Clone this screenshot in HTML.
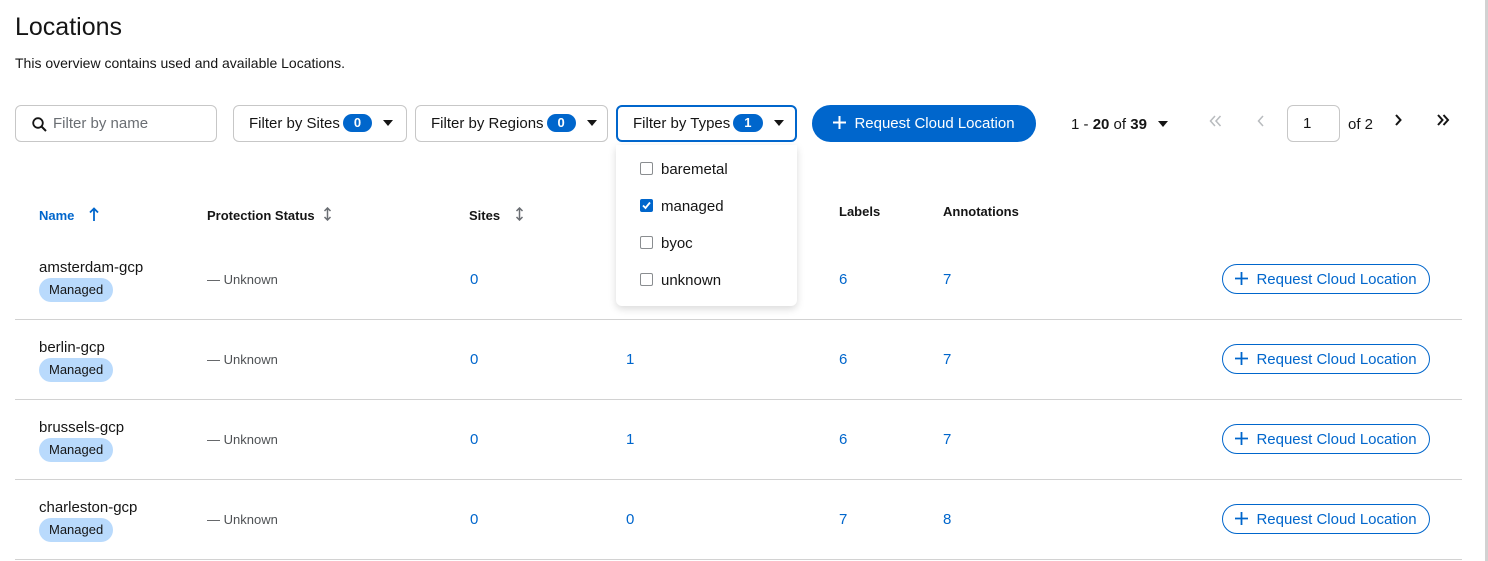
<!DOCTYPE html><html><head><style>
body{margin:0;width:1488px;height:561px;overflow:hidden;background:#fff;font-family:"Liberation Sans",sans-serif;color:#151515;position:relative}
.a{position:absolute;white-space:nowrap}
.box{position:absolute;box-sizing:border-box;border:1px solid #c7c7c7;border-radius:6px;height:37px;top:105px;font-size:15px;line-height:36px}
.badge{display:inline-block;background:#0066cc;color:#fff;border-radius:10px;font-size:13px;font-weight:bold;line-height:18px;padding:0 11px;margin-left:3px;vertical-align:1px}
.caret{display:inline-block;width:0;height:0;border-left:5px solid transparent;border-right:5px solid transparent;border-top:6px solid #151515;margin-left:11px;vertical-align:2px}
.link{color:#0066cc;font-size:15px}
.hdr{font-size:13px;font-weight:bold;color:#151515}
.man{position:absolute;left:39px;background:#b9dafc;border-radius:12px;font-size:13px;padding:0 10px;line-height:24px;color:#151515}
.rb{position:absolute;left:1222px;width:208px;height:30px;box-sizing:border-box;border:1px solid #0066cc;border-radius:16px;color:#0066cc;font-size:15px;line-height:29px;text-align:center}
.rb svg,.pb svg{vertical-align:-1px;margin-right:8px}
.line{position:absolute;left:15px;width:1447px;height:1px;background:#d2d2d2}
.cb{position:absolute;left:640px;width:13px;height:13px;box-sizing:border-box;border:1px solid #8a8d90;border-radius:2px}
</style></head><body>
<div class="a" style="left:15px;top:13px;font-size:25px">Locations</div>
<div class="a" style="left:15px;top:55px;font-size:14px">This overview contains used and available Locations.</div>
<div class="box" style="left:15px;width:202px;padding-left:37px;color:#6a6e73">Filter by name
<svg style="position:absolute;left:16px;top:11px" width="15" height="15" viewBox="0 0 15 15"><circle cx="6" cy="6" r="4.8" fill="none" stroke="#151515" stroke-width="1.8"/><path d="M9.5 9.5L14 14" stroke="#151515" stroke-width="2"/></svg></div>
<div class="box" style="left:233px;width:174px;padding-left:15px">Filter by Sites<span class="badge">0</span><span class="caret"></span></div>
<div class="box" style="left:415px;width:193px;padding-left:15px">Filter by Regions<span class="badge">0</span><span class="caret"></span></div>
<div class="box" style="left:616px;width:181px;padding-left:15px;border:2px solid #0066cc;line-height:34px">Filter by Types<span class="badge">1</span><span class="caret"></span></div>
<div class="a pb" style="left:812px;top:105px;width:224px;height:37px;border-radius:19px;background:#0066cc;color:#fff;font-size:15px;line-height:38px;text-align:center"><svg width="13" height="13" viewBox="0 0 13 13"><path d="M6.5 0V13M0 6.5H13" stroke="#fff" stroke-width="2"/></svg>Request Cloud Location</div>
<div class="a" style="left:1071px;top:116px;font-size:15px">1 - <b>20</b> of <b>39</b><span class="caret"></span></div>
<svg class="a" style="left:1209px;top:115px" width="13" height="12" viewBox="0 0 13 12"><path d="M6 1L1.5 6L6 11M11.5 1L7 6L11.5 11" stroke="#b8bbbe" stroke-width="1.5" fill="none"/></svg>
<svg class="a" style="left:1257px;top:115px" width="7" height="12" viewBox="0 0 7 12"><path d="M6 1L1.5 6L6 11" stroke="#b8bbbe" stroke-width="1.5" fill="none"/></svg>
<div class="box" style="left:1287px;width:53px;padding-left:15px">1</div>
<div class="a" style="left:1348px;top:116px;font-size:15px">of 2</div>
<svg class="a" style="left:1395px;top:114px" width="7" height="12" viewBox="0 0 7 12"><path d="M1 1L5.5 6L1 11" stroke="#151515" stroke-width="2" fill="none"/></svg>
<svg class="a" style="left:1437px;top:114px" width="13" height="12" viewBox="0 0 13 12"><path d="M1 1L5.5 6L1 11M6.5 1L11 6L6.5 11" stroke="#151515" stroke-width="2" fill="none"/></svg>
<div class="a hdr" style="left:39px;top:208px;color:#0066cc">Name</div>
<svg class="a" style="left:89px;top:207px" width="10" height="14" viewBox="0 0 10 14"><path d="M5 14V2M1 5.5L5 1.5L9 5.5" stroke="#0066cc" stroke-width="1.8" fill="none"/></svg>
<div class="a hdr" style="left:207px;top:208px">Protection Status</div>
<svg class="a" style="left:323px;top:207px" width="9" height="14" viewBox="0 0 9 14"><path d="M4.5 1V13M1.5 4L4.5 1L7.5 4M1.5 10L4.5 13L7.5 10" stroke="#6a6e73" stroke-width="1.5" fill="none"/></svg>
<div class="a hdr" style="left:469px;top:208px">Sites</div>
<svg class="a" style="left:515px;top:207px" width="9" height="14" viewBox="0 0 9 14"><path d="M4.5 1V13M1.5 4L4.5 1L7.5 4M1.5 10L4.5 13L7.5 10" stroke="#6a6e73" stroke-width="1.5" fill="none"/></svg>
<div class="a hdr" style="left:839px;top:204px">Labels</div>
<div class="a hdr" style="left:943px;top:204px">Annotations</div>
<div class="line" style="top:319px"></div><div class="line" style="top:399px"></div><div class="line" style="top:479px"></div><div class="line" style="top:559px"></div>
<div class="a" style="left:39px;top:259px;font-size:15px">amsterdam-gcp</div><div class="man" style="top:278px">Managed</div>
<div class="a" style="left:39px;top:339px;font-size:15px">berlin-gcp</div><div class="man" style="top:358px">Managed</div>
<div class="a" style="left:39px;top:419px;font-size:15px">brussels-gcp</div><div class="man" style="top:438px">Managed</div>
<div class="a" style="left:39px;top:499px;font-size:15px">charleston-gcp</div><div class="man" style="top:518px">Managed</div>
<div class="a" style="left:207px;top:272px;font-size:13px;color:#4f5255">— Unknown</div>
<div class="a" style="left:207px;top:352px;font-size:13px;color:#4f5255">— Unknown</div>
<div class="a" style="left:207px;top:432px;font-size:13px;color:#4f5255">— Unknown</div>
<div class="a" style="left:207px;top:512px;font-size:13px;color:#4f5255">— Unknown</div>
<div class="a link" style="left:470px;top:271px">0</div><div class="a link" style="left:839px;top:271px">6</div><div class="a link" style="left:943px;top:271px">7</div>
<div class="a link" style="left:470px;top:351px">0</div><div class="a link" style="left:626px;top:351px">1</div><div class="a link" style="left:839px;top:351px">6</div><div class="a link" style="left:943px;top:351px">7</div>
<div class="a link" style="left:470px;top:431px">0</div><div class="a link" style="left:626px;top:431px">1</div><div class="a link" style="left:839px;top:431px">6</div><div class="a link" style="left:943px;top:431px">7</div>
<div class="a link" style="left:470px;top:511px">0</div><div class="a link" style="left:626px;top:511px">0</div><div class="a link" style="left:839px;top:511px">7</div><div class="a link" style="left:943px;top:511px">8</div>
<div class="rb" style="top:264px"><svg width="13" height="13" viewBox="0 0 13 13"><path d="M6.5 0V13M0 6.5H13" stroke="#0066cc" stroke-width="1.8"/></svg>Request Cloud Location</div>
<div class="rb" style="top:344px"><svg width="13" height="13" viewBox="0 0 13 13"><path d="M6.5 0V13M0 6.5H13" stroke="#0066cc" stroke-width="1.8"/></svg>Request Cloud Location</div>
<div class="rb" style="top:424px"><svg width="13" height="13" viewBox="0 0 13 13"><path d="M6.5 0V13M0 6.5H13" stroke="#0066cc" stroke-width="1.8"/></svg>Request Cloud Location</div>
<div class="rb" style="top:504px"><svg width="13" height="13" viewBox="0 0 13 13"><path d="M6.5 0V13M0 6.5H13" stroke="#0066cc" stroke-width="1.8"/></svg>Request Cloud Location</div>
<div class="a" style="left:616px;top:145px;width:181px;height:161px;background:#fff;border-radius:0 0 6px 6px;box-shadow:0 3px 8px rgba(0,0,0,.15)"></div>
<div class="cb" style="top:162px"></div><div class="a" style="left:661px;top:161px;font-size:15px">baremetal</div>
<div class="cb" style="top:199px;background:#0066cc;border-color:#0066cc"><svg width="11" height="11" viewBox="0 0 11 11" style="position:absolute;left:0;top:0"><path d="M2 5.5L4.5 8L9 2.5" stroke="#fff" stroke-width="1.8" fill="none"/></svg></div><div class="a" style="left:661px;top:198px;font-size:15px">managed</div>
<div class="cb" style="top:236px"></div><div class="a" style="left:661px;top:235px;font-size:15px">byoc</div>
<div class="cb" style="top:273px"></div><div class="a" style="left:661px;top:272px;font-size:15px">unknown</div>
<div class="a" style="left:1485px;top:0;width:3px;height:561px;background:#d2d2d2"></div>
</body></html>
